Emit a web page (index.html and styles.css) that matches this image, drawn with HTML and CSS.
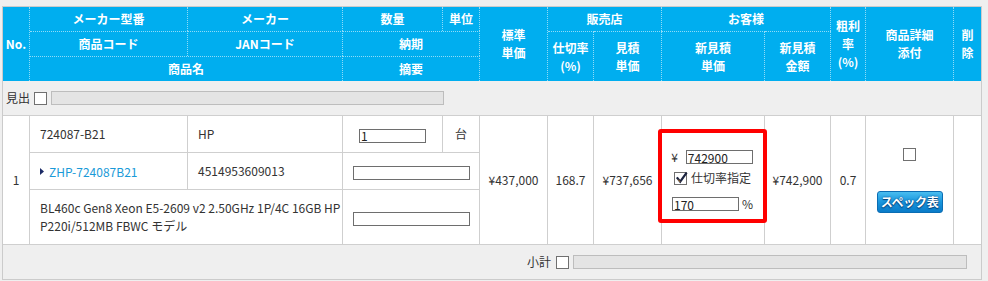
FILE: index.html
```html
<!DOCTYPE html>
<html lang="ja">
<head>
<meta charset="utf-8">
<title>見積明細</title>
<link rel="stylesheet" href="styles.css">
</head>
<body>
<div class="wrap">
<table class="quote">
  <colgroup>
    <col class="w-no"><col class="w-a"><col class="w-b"><col class="w-qty"><col class="w-unit">
    <col class="w-std"><col class="w-rate"><col class="w-est"><col class="w-new"><col class="w-amt">
    <col class="w-gross"><col class="w-detail"><col class="w-del">
  </colgroup>
  <thead>
    <tr class="hr">
      <th rowspan="3">No.</th>
      <th>メーカー型番</th>
      <th>メーカー</th>
      <th>数量</th>
      <th>単位</th>
      <th rowspan="3">標準<br>単価</th>
      <th colspan="2">販売店</th>
      <th colspan="2">お客様</th>
      <th rowspan="3">粗利<br>率<br>(%)</th>
      <th rowspan="3">商品詳細<br>添付</th>
      <th rowspan="3" class="last">削<br>除</th>
    </tr>
    <tr class="hr">
      <th>商品コード</th>
      <th>JANコード</th>
      <th colspan="2">納期</th>
      <th rowspan="2">仕切率<br>(%)</th>
      <th rowspan="2">見積<br>単価</th>
      <th rowspan="2">新見積<br>単価</th>
      <th rowspan="2">新見積<br>金額</th>
    </tr>
    <tr class="hr">
      <th colspan="2">商品名</th>
      <th colspan="2">摘要</th>
    </tr>
  </thead>
  <tbody>
    <tr class="band">
      <td colspan="13" class="last">
        <div class="band-row">
          <span>見出</span><span class="cb"></span><span class="bar bar-head"></span>
        </div>
      </td>
    </tr>
    <tr class="r1">
      <td rowspan="3" class="c">1</td>
      <td class="t">724087-B21</td>
      <td class="t">HP</td>
      <td class="c"><input class="field qty" value="1"></td>
      <td class="c">台</td>
      <td rowspan="3" class="c">¥437,000</td>
      <td rowspan="3" class="c">168.7</td>
      <td rowspan="3" class="c">¥737,656</td>
      <td rowspan="3" class="newprice">
        <div class="hl">
          <div class="hl-row r-price"><span>¥</span><input class="field qty" value="742900"></div>
          <div class="hl-row r-check"><span class="cb checked"><svg width="13" height="13" viewBox="0 0 13 13"><path d="M2.5 6.2 L5.2 9.6 L11 1.6" fill="none" stroke="#1b2440" stroke-width="2.2" stroke-linecap="square"/><path d="M3.2 7.6 L5.2 10" stroke="#e0902a" stroke-width="0.8" fill="none"/></svg></span><span>仕切率指定</span></div>
          <div class="hl-row r-rate"><input class="field qty" value="170"><span>%</span></div>
        </div>
      </td>
      <td rowspan="3" class="c">¥742,900</td>
      <td rowspan="3" class="c">0.7</td>
      <td rowspan="3" class="c">
        <div class="detail">
          <span class="cb"></span>
          <button class="spec" type="button">スペック表</button>
        </div>
      </td>
      <td rowspan="3" class="last"></td>
    </tr>
    <tr class="r2">
      <td class="t"><a class="code" href="#"><svg class="tri" width="4" height="7" viewBox="0 0 4 7"><polygon points="0,0 4,3.5 0,7" fill="#1c2b66"/></svg>ZHP-724087B21</a></td>
      <td class="t">4514953609013</td>
      <td colspan="2" class="c"><input class="field wide"></td>
    </tr>
    <tr class="r3">
      <td colspan="2" class="t desc">BL460c Gen8 Xeon E5-2609 v2 2.50GHz 1P/4C 16GB HP<br>P220i/512MB FBWC モデル</td>
      <td colspan="2" class="c"><input class="field wide"></td>
    </tr>
    <tr class="band foot">
      <td colspan="13" class="last">
        <div class="band-row end">
          <span>小計</span><span class="cb"></span><span class="bar bar-sub"></span>
        </div>
      </td>
    </tr>
  </tbody>
</table>
</div>
</body>
</html>
```

FILE: styles.css
```css
* { box-sizing: border-box; }

body {
  margin: 0;
  background: #efefef;
  font-family: "Noto Sans CJK JP", sans-serif;
  font-size: 12px;
  color: #333;
}

.wrap { padding: 6px 0 0 2px; }

.quote {
  width: 980px;
  table-layout: fixed;
  border-collapse: separate;
  border-spacing: 0;
  border: 1px solid #cbcbcb;
  background: #fff;
}

.w-no { width: 27px; }
.w-a { width: 158px; }
.w-b { width: 155px; }
.w-qty { width: 100px; }
.w-unit { width: 37px; }
.w-std { width: 68px; }
.w-rate { width: 46px; }
.w-est { width: 68px; }
.w-new { width: 103px; }
.w-amt { width: 66px; }
.w-gross { width: 35px; }
.w-detail { width: 88px; }
.w-del { width: 27px; }

th {
  background: #00aeef;
  color: #fff;
  font-weight: bold;
  font-size: 12px;
  line-height: 18px;
  text-align: center;
  vertical-align: middle;
  padding: 0;
  border-right: 1px dotted #8fdcf8;
}
.hr { height: 24px; }
.hr + .hr th { border-top: 1px dotted #8fdcf8; }
.hr + .hr { height: 25px; }

td {
  padding: 0;
  vertical-align: middle;
  border-right: 1px solid #cfcfcf;
  border-bottom: 1px solid #cfcfcf;
  line-height: 18px;
}
.last { border-right: none; }

.t { padding-left: 10px; white-space: nowrap; }
.c { text-align: center; }

.band td { background: #efefef; }
.band { height: 35px; }
.foot { height: 34px; }
.foot td { border-bottom: none; }

.band-row {
  display: flex;
  align-items: center;
  gap: 4px;
  padding-left: 3px;
}
.band-row.end {
  justify-content: flex-end;
  padding-right: 14px;
  gap: 4px;
}
.band-row.end span:first-child { margin-right: 1px; }

.cb {
  display: inline-block;
  width: 13px;
  height: 13px;
  border: 1px solid #707070;
  background: #fff;
  flex: none;
  position: relative;
}
.cb.checked svg { position: absolute; left: 0; top: -1px; }

.bar {
  display: inline-block;
  height: 14px;
  background: #e4e4e4;
  border: 1px solid #bdbdbd;
}
.bar-head { width: 393px; }
.bar-sub { width: 394px; }

.r1 { height: 37px; }
.r2 { height: 37px; }
.r3 { height: 55px; }

.field {
  height: 14px;
  border: 1px solid #6e6e6e;
  padding: 0 1px;
  font-family: "Noto Sans CJK JP", sans-serif;
  font-size: 12px;
  line-height: 12px;
  color: #222;
  background: #fff;
  margin: 0;
  vertical-align: middle;
  display: inline-block;
}
.qty { width: 67px; }
.wide { width: 117px; }

.code {
  color: #1a9ad8;
  text-decoration: none;
  display: inline-flex;
  align-items: center;
}
.tri { margin-right: 5px; }

.desc { white-space: nowrap; }

.newprice {
  vertical-align: top;
  padding-top: 13px;
}
.hl {
  margin: 0 -3px 0 -4px;
  height: 94px;
  border: 4px solid #ff0000;
  border-radius: 3px;
  padding-top: 17px;
  display: flex;
  flex-direction: column;
  align-items: center;
}
.hl-row {
  display: flex;
  align-items: center;
  justify-content: center;
  height: 14px;
}
.r-price { gap: 8px; }
.r-price span { margin-left: -1px; }
.r-check { margin-top: 7px; gap: 4px; }
.r-rate { margin-top: 12px; gap: 3px; }

.detail {
  display: flex;
  flex-direction: column;
  align-items: center;
  gap: 30px;
}
.spec {
  width: 66px;
  height: 22px;
  padding: 0;
  border: 1px solid #0b6db3;
  border-radius: 3px;
  background: linear-gradient(#49bdf0, #1896dd 50%, #0a7bc8);
  color: #fff;
  font-family: "Noto Sans CJK JP", sans-serif;
  font-weight: bold;
  font-size: 12px;
  letter-spacing: -0.3px;
  text-shadow: 0 0 2px #003d78, 0 1px 1px #003d78;
}
```
